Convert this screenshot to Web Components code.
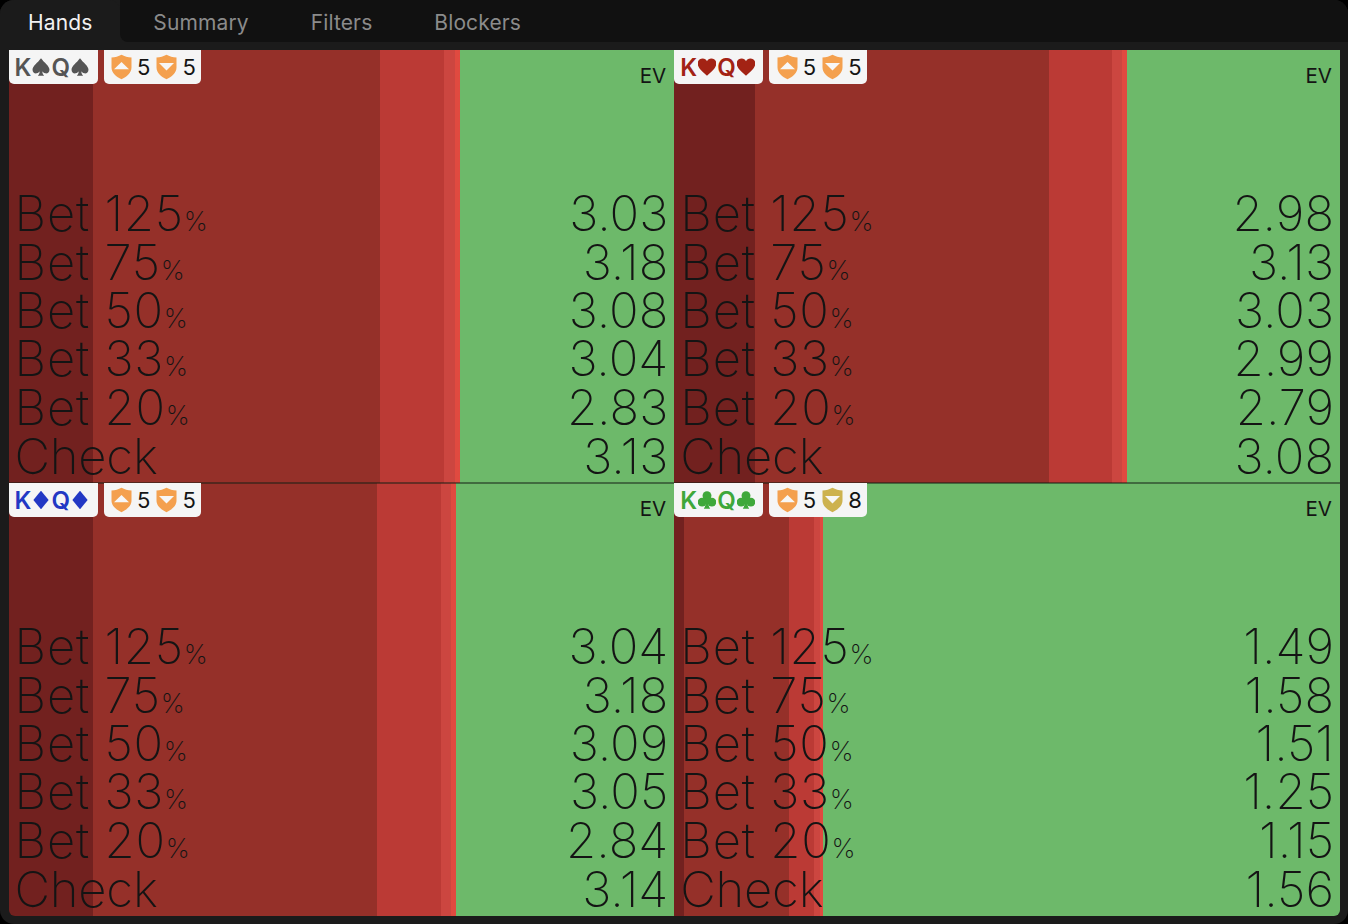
<!DOCTYPE html>
<html>
<head>
<meta charset="utf-8">
<title>Hands</title>
<style>
html, body { margin: 0; height: 100%; background: #000; }
body { font-family: Inter, "Liberation Sans", sans-serif; }
</style>
</head>
<body>
<app-shell>
	<tab-bar slot="tabs"></tab-bar>
	<hand-grid></hand-grid>
</app-shell>
<script>
(function() {
	const COLORS = ["#72211f", "#953029", "#bb3a35", "#cc4640", "#e04a40", "#6db96a"];
	const ACTIONS = [["Bet", "125"], ["Bet", "75"], ["Bet", "50"], ["Bet", "33"], ["Bet", "20"], ["Check", ""]];
	const SUITS = {
		spade: `<path d="M9 .8C12 5 17 8 17 11.6 17 14 15 15.5 13 15 11.8 14.7 10.8 14 10.2 13 10.3 14.8 10.8 16 12 17.2L6 17.2C7.2 16 7.7 14.8 7.8 13 7.2 14 6.2 14.7 5 15 3 15.5 1 14 1 11.6 1 8 6 5 9 .8Z"/>`,
		heart: `<path d="M9 17.2C5 13.2.2 10 .2 5.6.2 2.8 2.4 1 4.9 1 6.8 1 8.2 2 9 3.6 9.8 2 11.2 1 13.1 1 15.6 1 17.8 2.8 17.8 5.6 17.8 10 13 13.2 9 17.2Z"/>`,
		diamond: `<path d="M9 .2L16.2 9 9 17.8 1.8 9Z"/>`,
		club: `<circle cx="9" cy="5" r="4.2"/><circle cx="4.4" cy="11" r="4.2"/><circle cx="13.6" cy="11" r="4.2"/><path d="M8 8H10C10 12.5 10.6 15.4 12 17.2H6C7.4 15.4 8 12.5 8 8Z"/>`
	};
	const HANDS = [
		{ suit: "spade", color: "#555555", up: ["#f4a04e", 5], down: ["#f4a04e", 5], ev: ["3.03", "3.18", "3.08", "3.04", "2.83", "3.13"], bars: [84.5, 287, 64, 11, 5, 214] },
		{ suit: "heart", color: "#a32314", up: ["#f4a04e", 5], down: ["#f4a04e", 5], ev: ["2.98", "3.13", "3.03", "2.99", "2.79", "3.08"], bars: [81, 294, 63, 10, 5, 213] },
		{ suit: "diamond", color: "#2238c4", up: ["#f4a04e", 5], down: ["#f4a04e", 5], ev: ["3.04", "3.18", "3.09", "3.05", "2.84", "3.14"], bars: [84.5, 284.5, 64, 10, 5, 218.5] },
		{ suit: "club", color: "#3fa83a", up: ["#f4a04e", 5], down: ["#cdb24f", 8], ev: ["1.49", "1.58", "1.51", "1.25", "1.15", "1.56"], bars: [10, 105, 25, 6, 3, 517] }
	];

	class AppShell extends HTMLElement {
		constructor() {
			super();
			this.attachShadow({mode: "open"}).innerHTML = `
				<style>
				:host {
					display: flex;
					flex-direction: column;
					height: 924px;
					background: #1b1b1b;
					border-radius: 14px;
					overflow: hidden;
				}
				#main { flex: 1; padding: 8px 8px 8px 8.5px; min-height: 0; display: flex; }
				</style>
				<slot name="tabs"></slot>
				<div id="main"><slot></slot></div>
			`;
		}
	}

	class TabBar extends HTMLElement {
		constructor() {
			super();
			const names = ["Hands", "Summary", "Filters", "Blockers"];
			this.attachShadow({mode: "open"}).innerHTML = `
				<style>
				:host {
					display: flex;
					height: 42px;
					font-size: 21px;
					letter-spacing: 0.12px;
				}
				div { padding: 10px 31px 0 31px; color: #8b8b8b; line-height: 26px; background: #111111; }
				div.on { color: #f2f2f2; background: #1b1b1b; border-radius: 0 10px 0 0; padding: 10px 28px 0 28px; }
				div.on + div { padding-left: 33px; border-radius: 0 0 0 8px; }
				div.fill { flex: 1; padding: 0; }
				</style>
				${names.map((n, i) => `<div class="${i == 0 ? "on" : ""}">${n}</div>`).join("")}
				<div class="fill"></div>
			`;
		}
	}

	class HandGrid extends HTMLElement {
		constructor() {
			super();
			this.attachShadow({mode: "open"}).innerHTML = `
				<style>
				:host {
					flex: 1;
					display: grid;
					grid-template-columns: 1fr 1fr;
					grid-template-rows: 1fr 1fr;
				}
				</style>
			`;
			HANDS.forEach((h, i) => {
				let cell = document.createElement("hand-cell");
				cell.data = h;
				cell.setAttribute("pos", i);
				this.shadowRoot.appendChild(cell);
			});
		}
	}

	class ShieldIcon extends HTMLElement {
		constructor() {
			super();
			this.attachShadow({mode: "open"});
		}
		connectedCallback() {
			const down = this.getAttribute("dir") == "down";
			const color = this.getAttribute("color");
			this.shadowRoot.innerHTML = `
				<style>
				:host { display: block; width: 21px; height: 26px; }
				svg { display: block; }
				</style>
				<svg width="21" height="26" viewBox="0 0 21 26">
					<path d="M10.5 .8C13.5 2.4 16.8 3.3 20.5 3.6V13.5C20.5 19 15.6 22.8 10.5 25.2 5.4 22.8 .5 19 .5 13.5V3.6C4.2 3.3 7.5 2.4 10.5 .8Z" fill="${color}"/>
					<path d="${down ? "M3 9H18L10.5 16.5Z" : "M10.5 8L18 15.2H3Z"}" fill="#f7f7f7"/>
				</svg>
			`;
		}
	}

	class HandCell extends HTMLElement {
		constructor() {
			super();
			this.attachShadow({mode: "open"});
		}
		connectedCallback() {
			const h = this.data;
			const bars = h.bars.map((w, i) => `<i style="flex:${w} ${w} 0;background:${COLORS[i]}"></i>`).join("");
			const rows = ACTIONS.map((a, i) => `
				<div class="row">
					${a[1] ? `<span class="bet">${a[0]} <em>${a[1]}</em><small>%</small></span>` : `<span class="chk">${a[0]}</span>`}
					<span>${h.ev[i]}</span>
				</div>`).join("");
			const suit = `<svg width="18" height="18" viewBox=".5 .5 17 17" fill="${h.color}">${SUITS[h.suit]}</svg>`;
			this.shadowRoot.innerHTML = `
				<style>
				:host { display: block; position: relative; min-height: 0; }
				:host([pos="0"])::after, :host([pos="1"])::after {
					content: "";
					position: absolute;
					left: 0;
					right: 0;
					bottom: -1px;
					height: 2px;
					background: rgba(20, 30, 20, 0.5);
					z-index: 1;
				}
				#bars { position: absolute; inset: 0; display: flex; overflow: hidden; }
				:host([pos="2"]) #bars { border-radius: 0 0 0 6px; }
				:host([pos="3"]) #bars { border-radius: 0 0 6px 0; }
				#bars i { display: block; }
				#chips { position: absolute; left: 0; top: 0; display: flex; gap: 6px; align-items: flex-start; z-index: 2; }
				.chip {
					display: flex;
					align-items: center;
					height: 34px;
					background: #f5f5f5;
					border-radius: 0 0 5px 5px;
					box-sizing: border-box;
				}
				#cards {
					padding: 0 6px;
					width: 89px;
					font-size: 24px;
					font-weight: 600;
					color: ${h.color};
					gap: 1px;
				}
				#rates { padding: 0 6px 0 7.5px; width: 97.5px; font-size: 22px; color: #141414; }
				#rates span { margin: 0 6px 0 5px; }
				#rates span:last-child { margin-right: 0; }
				#ev { position: absolute; right: 8px; top: 14px; font-size: 20.5px; line-height: 24px; color: #141414; }
				#rows {
					position: absolute;
					left: 6px;
					right: 6px;
					bottom: 2px;
					font-size: 49px;
					font-weight: 250;
					line-height: 48.4px;
					color: #141414;
				}
				.row { display: flex; justify-content: space-between; height: 48.4px; }
				.row:last-child { margin-top: .5px; }
				.bet { letter-spacing: .8px; }
				.chk { letter-spacing: -.2px; }
				em { font-style: normal; letter-spacing: .7px; }
				small { font-size: 27px; line-height: 0; letter-spacing: 0; }
				</style>
				<div id="bars">${bars}</div>
				<div id="rows">${rows}</div>
				<div id="ev">EV</div>
				<div id="chips">
					<div class="chip" id="cards"><span>K</span>${suit}<span>Q</span>${suit}</div>
					<div class="chip" id="rates">
						<shield-icon dir="up" color="${h.up[0]}"></shield-icon><span>${h.up[1]}</span>
						<shield-icon dir="down" color="${h.down[0]}"></shield-icon><span>${h.down[1]}</span>
					</div>
				</div>
			`;
		}
	}

	customElements.define("app-shell", AppShell);
	customElements.define("tab-bar", TabBar);
	customElements.define("shield-icon", ShieldIcon);
	customElements.define("hand-cell", HandCell);
	customElements.define("hand-grid", HandGrid);
})();
</script>
</body>
</html>
